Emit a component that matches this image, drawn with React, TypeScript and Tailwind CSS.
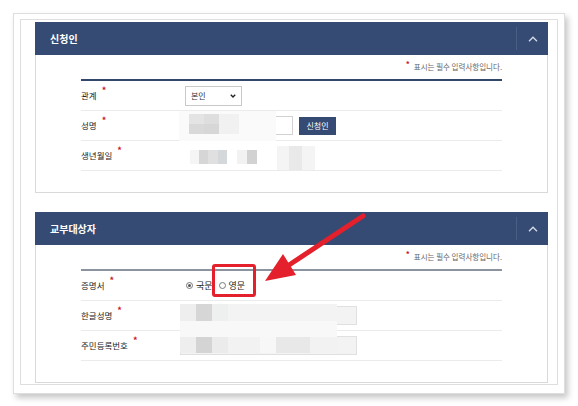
import React from 'react';

const NAVY = 'bg-[#354b73]';

const Star = () => (
  <span className="ml-[5px] -mt-[10px] text-[9px] font-bold leading-none text-[#c8161e]">*</span>
);

const Label: React.FC<{ text: string }> = ({ text }) => (
  <div className="flex w-[99px] shrink-0 items-center">
    <span className="text-[8.5px] leading-none text-[#222]">{text}</span>
    <Star />
  </div>
);

const ChevronUp = () => (
  <svg width="10" height="6" viewBox="0 0 10 6" fill="none">
    <polyline points="1,5.2 5,1.2 9,5.2" stroke="#d6ddea" strokeWidth="1.3" />
  </svg>
);

const PanelHeader: React.FC<{ title: string }> = ({ title }) => (
  <div className={`flex h-[33px] items-center justify-between ${NAVY} pl-[15px]`}>
    <span className="text-[10px] font-bold leading-none text-white">{title}</span>
    <div className="flex h-[23px] w-[32px] items-center justify-center border-l border-[#4b5f84]">
      <ChevronUp />
    </div>
  </div>
);

const RequiredNote = () => (
  <div className="flex h-[24px] items-center justify-end">
    <span className="-mt-[6px] mr-[4px] text-[8px] font-bold leading-none text-[#c8161e]">*</span>
    <span className="text-[7.5px] leading-none text-[#666]">표시는 필수 입력사항입니다.</span>
  </div>
);

const Row: React.FC<{ label: string; children?: React.ReactNode }> = ({ label, children }) => (
  <div className="flex h-[30px] items-center border-b border-[#ebebeb]">
    <Label text={label} />
    <div className="flex items-center">{children}</div>
  </div>
);

// pixelated (blurred) personal data
type Cell = [number, number, number, number, string];

const Mosaic: React.FC<{ w: number; h: number; cells: Cell[]; className?: string }> = ({ w, h, cells, className }) => (
  <svg width={w} height={h} viewBox={`0 0 ${w} ${h}`} className={className}>
    {cells.map(([x, y, cw, ch, c], i) => (
      <rect key={i} x={x} y={y} width={cw} height={ch} fill={c} />
    ))}
  </svg>
);

const nameCells: Cell[] = [
  [0, 0, 97, 30, '#fafafa'],
  [10, 3, 15, 10, '#e4e4e4'],
  [25, 3, 15, 10, '#dedede'],
  [10, 13, 15, 10, '#d9d9d9'],
  [25, 13, 15, 10, '#d7d7d7'],
  [40, 3, 20, 20, '#f1f1f1'],
];

const birthCells: Cell[] = [
  [10, 8, 9, 14, '#f5f5f5'],
  [19, 8, 9, 14, '#d6d6d6'],
  [28, 8, 10, 14, '#e0e0e0'],
  [38, 8, 9, 14, '#d5d8da'],
  [57, 8, 10, 14, '#f2f2f2'],
  [67, 8, 10, 14, '#d2d2d2'],
  [97, 4, 38, 24, '#f4f4f4'],
  [109, 4, 13, 24, '#e9e9e9'],
];

const targetCells: Cell[] = [
  [0, 0, 16, 17, '#eeeeee'],
  [16, 0, 16, 17, '#d6d6d6'],
  [32, 0, 16, 17, '#eef0ef'],
  [48, 0, 109, 17, '#f3f3f3'],
  [0, 17, 157, 16, '#f8f8f8'],
  [0, 33, 16, 16, '#eeeeee'],
  [16, 33, 16, 16, '#d4d4d4'],
  [32, 33, 16, 16, '#ebebeb'],
  [48, 33, 32, 16, '#f2f2f2'],
  [80, 33, 16, 16, '#f7f7f7'],
  [96, 33, 34, 16, '#e8e8e8'],
  [130, 33, 27, 16, '#f2f2f2'],
];

const Radio: React.FC<{ checked?: boolean; label: string }> = ({ checked, label }) => (
  <div className="flex items-center">
    <span className="flex h-[7px] w-[7px] items-center justify-center rounded-full border border-[#777] bg-white">
      {checked && <span className="h-[3px] w-[3px] rounded-full bg-[#555]" />}
    </span>
    <span className="ml-[3px] text-[9px] leading-none text-[#222]">{label}</span>
  </div>
);

const App: React.FC = () => {
  return (
    <div className="relative h-[406px] w-[578px] overflow-hidden bg-white pl-[13px] pt-[13px] font-['Noto_Sans_CJK_KR','Noto_Sans',sans-serif]">
      {/* paper frame */}
      <div className="h-[381px] w-[552px] border border-[#dedede] bg-white pl-[6px] pt-[5px] shadow-[3px_4px_6px_rgba(0,0,0,0.22)]">
        <div className="h-[366px] w-[538px] border border-[#dedede] pl-[14px] pt-[2px]">
          {/* 신청인 */}
          <div className="w-[513px]">
            <PanelHeader title="신청인" />
            <div className="h-[138px] border border-t-0 border-[#d9d9d9] px-[45px]">
              <RequiredNote />
              <div className="border-t-2 border-[#33476b]">
                <Row label="관계">
                  <div className="ml-[5px] flex h-[20px] w-[57px] items-center justify-between border border-[#c9c9c9] bg-white pl-[5px] pr-[5px]">
                    <span className="text-[8px] leading-none text-[#333]">본인</span>
                    <svg width="6" height="4" viewBox="0 0 6 4">
                      <polyline points="0.8,0.8 3,3 5.2,0.8" fill="none" stroke="#222" strokeWidth="1.4" />
                    </svg>
                  </div>
                </Row>
                <Row label="성명">
                  <div className="relative h-[19px] w-[113px] border border-[#d2d2d2] bg-white">
                    <Mosaic w={97} h={30} cells={nameCells} className="absolute -left-[2px] -top-[6px]" />
                  </div>
                  <div className={`ml-[6px] flex h-[18px] w-[37px] items-center justify-center ${NAVY} text-[8px] leading-none text-white`}>
                    신청인
                  </div>
                </Row>
                <Row label="생년월일">
                  <Mosaic w={140} h={28} cells={birthCells} />
                </Row>
              </div>
            </div>
          </div>

          {/* 교부대상자 */}
          <div className="mt-[19px] w-[513px]">
            <PanelHeader title="교부대상자" />
            <div className="h-[138px] border border-t-0 border-[#d9d9d9] px-[45px]">
              <RequiredNote />
              <div className="relative border-t-2 border-[#8a939e]">
                <Row label="증명서">
                  <div className="ml-[6px] flex items-center gap-[6px]">
                    <Radio checked label="국문" />
                    <Radio label="영문" />
                  </div>
                </Row>
                <Row label="한글성명">
                  <div className="h-[19px] w-[177px] border border-[#e0e0e0] bg-[#f3f3f3]" />
                </Row>
                <Row label="주민등록번호">
                  <div className="h-[19px] w-[177px] border border-[#e0e0e0] bg-[#f3f3f3]" />
                </Row>
                <Mosaic w={157} h={49} cells={targetCells} className="absolute left-[99px] top-[33px]" />
              </div>
            </div>
          </div>
        </div>
      </div>

      {/* annotation: red box + arrow */}
      <div className="absolute left-[212px] top-[264px] h-[33px] w-[44px] rounded-[3px] border-[3px] border-[#e3202b]" />
      <svg className="pointer-events-none absolute left-0 top-0" width="578" height="406" viewBox="0 0 578 406">
        <line x1="363" y1="216" x2="286" y2="267" stroke="#e3202b" strokeWidth="5" strokeLinecap="round" />
        <polygon points="265,281 283,254 296,275" fill="#e3202b" />
      </svg>
    </div>
  );
};

export default App;
